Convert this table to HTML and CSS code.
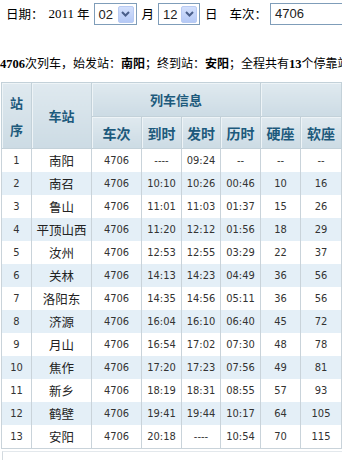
FILE: index.html
```html
<!DOCTYPE html>
<html>
<head>
<meta charset="utf-8">
<link rel="stylesheet" href="styles.css">
</head>
<body>
<div class="query">
  <span class="lbl l-date">日期：</span>
  <span class="year">2011</span>
  <span class="lbl l-year">年</span>
  <span class="sel s-month"><span class="val">02</span><span class="btn"><svg width="9" height="6" viewBox="0 0 9 6"><polyline points="1,1 4.5,4.5 8,1" fill="none" stroke="#4a5f8a" stroke-width="2"/></svg></span></span>
  <span class="lbl l-month">月</span>
  <span class="sel s-day"><span class="val">12</span><span class="btn"><svg width="9" height="6" viewBox="0 0 9 6"><polyline points="1,1 4.5,4.5 8,1" fill="none" stroke="#4a5f8a" stroke-width="2"/></svg></span></span>
  <span class="lbl l-day">日</span>
  <span class="lbl l-train">车次：</span>
  <span class="input">4706</span>
</div>
<div class="summary"><b class="num">4706</b>次列车，始发站：<b>南阳</b>；终到站：<b>安阳</b>；全程共有<b class="num">13</b>个停靠站。</div>
<table class="tt">
  <colgroup>
    <col class="c-no"><col class="c-st"><col class="c-tr"><col class="c-t"><col class="c-t2"><col class="c-t"><col class="c-t"><col class="c-t3">
  </colgroup>
  <thead>
    <tr class="h1">
      <th rowspan="2" class="vert">站<br>序</th>
      <th rowspan="2">车站</th>
      <th colspan="4">列车信息</th>
      <th colspan="2"></th>
    </tr>
    <tr class="h2">
      <th>车次</th><th>到时</th><th>发时</th><th>历时</th><th>硬座</th><th>软座</th>
    </tr>
  </thead>
  <tbody>
    <tr><td>1</td><td class="st">南阳</td><td>4706</td><td>----</td><td>09:24</td><td>--</td><td>--</td><td>--</td></tr>
    <tr class="alt"><td>2</td><td class="st">南召</td><td>4706</td><td>10:10</td><td>10:26</td><td>00:46</td><td>10</td><td>16</td></tr>
    <tr><td>3</td><td class="st">鲁山</td><td>4706</td><td>11:01</td><td>11:03</td><td>01:37</td><td>15</td><td>26</td></tr>
    <tr class="alt"><td>4</td><td class="st">平顶山西</td><td>4706</td><td>11:20</td><td>12:12</td><td>01:56</td><td>18</td><td>29</td></tr>
    <tr><td>5</td><td class="st">汝州</td><td>4706</td><td>12:53</td><td>12:55</td><td>03:29</td><td>22</td><td>37</td></tr>
    <tr class="alt"><td>6</td><td class="st">关林</td><td>4706</td><td>14:13</td><td>14:23</td><td>04:49</td><td>36</td><td>56</td></tr>
    <tr><td>7</td><td class="st">洛阳东</td><td>4706</td><td>14:35</td><td>14:56</td><td>05:11</td><td>36</td><td>56</td></tr>
    <tr class="alt"><td>8</td><td class="st">济源</td><td>4706</td><td>16:04</td><td>16:10</td><td>06:40</td><td>45</td><td>72</td></tr>
    <tr><td>9</td><td class="st">月山</td><td>4706</td><td>16:54</td><td>17:02</td><td>07:30</td><td>48</td><td>78</td></tr>
    <tr class="alt"><td>10</td><td class="st">焦作</td><td>4706</td><td>17:20</td><td>17:23</td><td>07:56</td><td>49</td><td>81</td></tr>
    <tr><td>11</td><td class="st">新乡</td><td>4706</td><td>18:19</td><td>18:31</td><td>08:55</td><td>57</td><td>93</td></tr>
    <tr class="alt"><td>12</td><td class="st">鹤壁</td><td>4706</td><td>19:41</td><td>19:44</td><td>10:17</td><td>64</td><td>105</td></tr>
    <tr><td>13</td><td class="st">安阳</td><td>4706</td><td>20:18</td><td>----</td><td>10:54</td><td>70</td><td>115</td></tr>
  </tbody>
</table>
<div class="after"></div>
</body>
</html>
```

FILE: styles.css
```css
html, body {
  margin: 0;
  padding: 0;
  background: #fff;
  overflow: hidden;
}
body {
  width: 342px;
  height: 460px;
  font-family: "Noto Sans CJK SC", sans-serif;
  color: #000;
}
.query {
  display: flex;
  align-items: center;
  height: 22px;
  margin-top: 3px;
  white-space: nowrap;
  font-size: 13px;
  overflow: hidden;
}
.query > * { flex-shrink: 0; }
.lbl {
  font-family: "Noto Sans CJK SC", sans-serif;
  font-size: 12.5px;
  line-height: 22px;
}
.l-date { margin-left: 6px; }
.year {
  font-family: "Liberation Serif", serif;
  font-size: 13px;
  margin-left: 5px;
}
.l-year { margin-left: 3px; }
.sel {
  box-sizing: border-box;
  height: 22px;
  border: 1px solid #7f9db9;
  background: #fff;
  display: flex;
  align-items: center;
  justify-content: space-between;
  padding: 0 2px 0 4px;
  font-family: "Liberation Sans", sans-serif;
  font-size: 13px;
  color: #222;
}
.s-month { width: 43px; margin-left: 4px; }
.s-day { width: 42px; margin-left: 4px; }
.btn {
  box-sizing: border-box;
  width: 16px;
  height: 17px;
  border: 1px solid #b9cbf3;
  border-radius: 2px;
  background: linear-gradient(#d3e0fc, #b5c9f6);
  display: flex;
  align-items: center;
  justify-content: center;
}
.l-month { margin-left: 5px; }
.l-day { margin-left: 5px; }
.l-train { margin-left: 12px; }
.input {
  box-sizing: border-box;
  height: 22px;
  width: 90px;
  margin-left: 3px;
  border: 1px solid #7f9db9;
  border-right: none;
  padding-left: 4px;
  line-height: 20px;
  font-family: "Liberation Sans", sans-serif;
  font-size: 13px;
  color: #222;
}
.summary {
  margin-top: 31px;
  height: 14px;
  line-height: 14px;
  font-size: 12px;
  white-space: nowrap;
  font-family: "Noto Sans CJK SC", sans-serif;
}
.summary b { font-weight: bold; }
.summary .num {
  font-family: "Liberation Serif", serif;
  font-size: 12.5px;
}
.tt {
  margin-top: 12px;
  margin-left: 1px;
  width: 340px;
  table-layout: fixed;
  border-collapse: collapse;
  border: 1px solid #bccad3;
}
.c-no { width: 30px; }
.c-st { width: 60px; }
.c-tr { width: 50px; }
.c-t { width: 40px; }
.c-t2 { width: 39px; }
.c-t3 { width: 41px; }
.tt th {
  padding: 0;
  background: linear-gradient(#dfe9ef, #ccdbe4);
  border: 1px solid #c3d1d9;
  box-shadow: inset 1px 1px 0 #eef4f7;
  color: #1d5a7c;
  font-weight: bold;
  font-size: 13px;
  text-align: center;
  vertical-align: middle;
}
.tt .h1 th { height: 33px; }
.tt .h2 th { height: 31px; font-size: 14px; }
.tt th.vert { line-height: 27px; font-size: 13px; }
.tt td {
  height: 23px;
  padding: 0;
  text-align: center;
  vertical-align: middle;
  border-left: 1px solid #c9d3da;
  border-right: 1px solid #c9d3da;
  font-family: "DejaVu Sans Condensed", "DejaVu Sans", sans-serif;
  font-size: 11px;
  color: #333;
}
.tt td.st {
  font-family: "Noto Sans CJK SC", sans-serif;
  font-size: 12.5px;
  color: #222;
}
.tt tr.alt td { background: #e4eff7; }
.tt tbody tr:last-child td { border-bottom: 1px solid #c9d3da; }
.after {
  margin-top: 2px;
  margin-left: 2px;
  height: 20px;
  border-left: 1px solid #d3dadf;
  border-top: 1px solid #e3e8ec;
}
```
